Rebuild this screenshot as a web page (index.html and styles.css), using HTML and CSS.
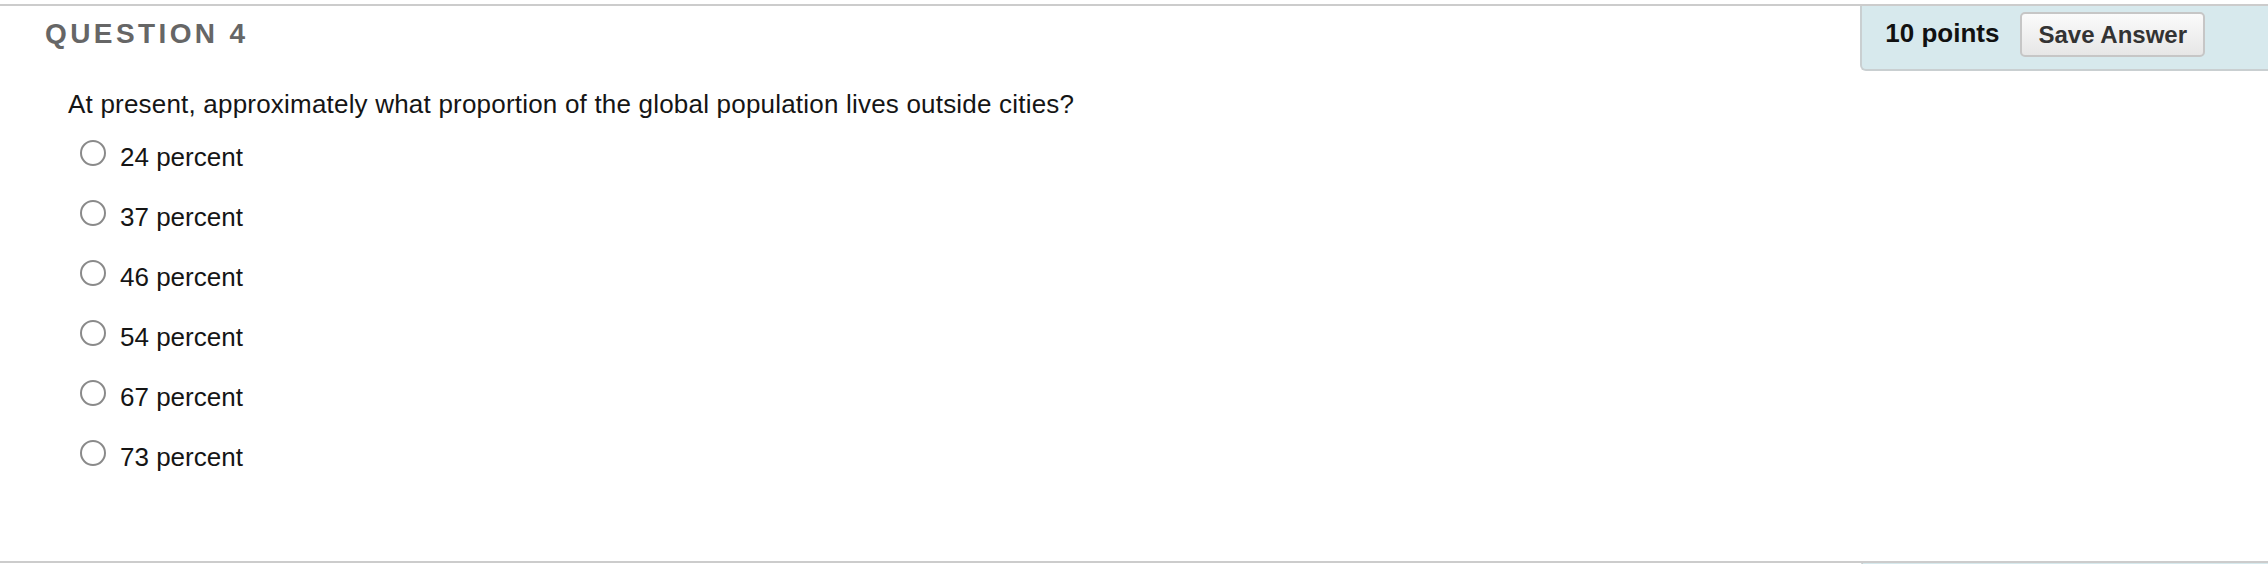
FILE: index.html
```html
<!DOCTYPE html>
<html lang="en">
<head>
<meta charset="utf-8">
<title>Question 4</title>
<link rel="stylesheet" href="styles.css">
</head>
<body>
<div class="page">
  <section class="question">
    <header class="q-header">
      <h2 class="q-title">QUESTION 4</h2>
      <div class="q-points">
        <span class="points">10 points</span>
        <button class="save" type="button">Save Answer</button>
      </div>
    </header>
    <div class="q-body">
      <p class="q-text">At present, approximately what proportion of the global population lives outside cities?</p>
      <ul class="options">
        <li class="option"><span class="radio"></span><span class="opt-label">24 percent</span></li>
        <li class="option"><span class="radio"></span><span class="opt-label">37 percent</span></li>
        <li class="option"><span class="radio"></span><span class="opt-label">46 percent</span></li>
        <li class="option"><span class="radio"></span><span class="opt-label">54 percent</span></li>
        <li class="option"><span class="radio"></span><span class="opt-label">67 percent</span></li>
        <li class="option"><span class="radio"></span><span class="opt-label">73 percent</span></li>
      </ul>
    </div>
  </section>
  <section class="question">
    <header class="q-header">
      <div class="q-points q-points-empty"></div>
    </header>
  </section>
</div>
</body>
</html>
```

FILE: styles.css
```css
html, body {
  margin: 0;
  padding: 0;
  background: #ffffff;
}

body {
  font-family: "Liberation Sans", Arial, Helvetica, sans-serif;
  color: #151515;
  overflow: hidden;
}

.page {
  padding-top: 4px;
}

.question {
  border-top: 2px solid #cccccc;
}

.q-header {
  display: flex;
  align-items: flex-start;
  justify-content: space-between;
}

.q-title {
  margin: 14px 0 0 45px;
  font-size: 28px;
  line-height: 28px;
  font-weight: bold;
  letter-spacing: 3.4px;
  color: #666666;
}

.q-points {
  margin-left: auto;
  display: flex;
  align-items: center;
  gap: 21px;
  padding: 6px 63px 12px 23px;
  background: #d7e9ed;
  border-left: 2px solid #c9cfd1;
  border-bottom: 2px solid #c9cfd1;
  border-bottom-left-radius: 6px;
}

.q-points-empty {
  width: 405px;
  height: 1px;
  padding: 0;
  border-bottom: none;
}

.points {
  font-size: 26px;
  font-weight: bold;
  color: #111111;
  line-height: 30px;
  margin-top: -3px;
}

.save {
  height: 45px;
  padding: 0 16px;
  font-family: "Liberation Sans", Arial, Helvetica, sans-serif;
  font-size: 24px;
  font-weight: bold;
  color: #333333;
  background: linear-gradient(#fbfbfb, #e6e6e6);
  border: 2px solid #c6c6c6;
  border-radius: 5px;
}

.q-body {
  padding: 18px 0 89px 0;
}

.q-text {
  margin: 0 0 23px 68px;
  font-size: 26px;
  line-height: 30px;
  letter-spacing: 0.2px;
}

.options {
  list-style: none;
  margin: 0;
  padding: 0;
  display: flex;
  flex-direction: column;
  gap: 30px;
}

.option {
  display: flex;
  align-items: flex-start;
  font-size: 26px;
  line-height: 30px;
}

.radio {
  box-sizing: border-box;
  width: 26px;
  height: 26px;
  margin: -2px 14px 0 80px;
  border: 2px solid #8a8a8a;
  border-radius: 50%;
  background: #ffffff;
  flex: none;
}
```
